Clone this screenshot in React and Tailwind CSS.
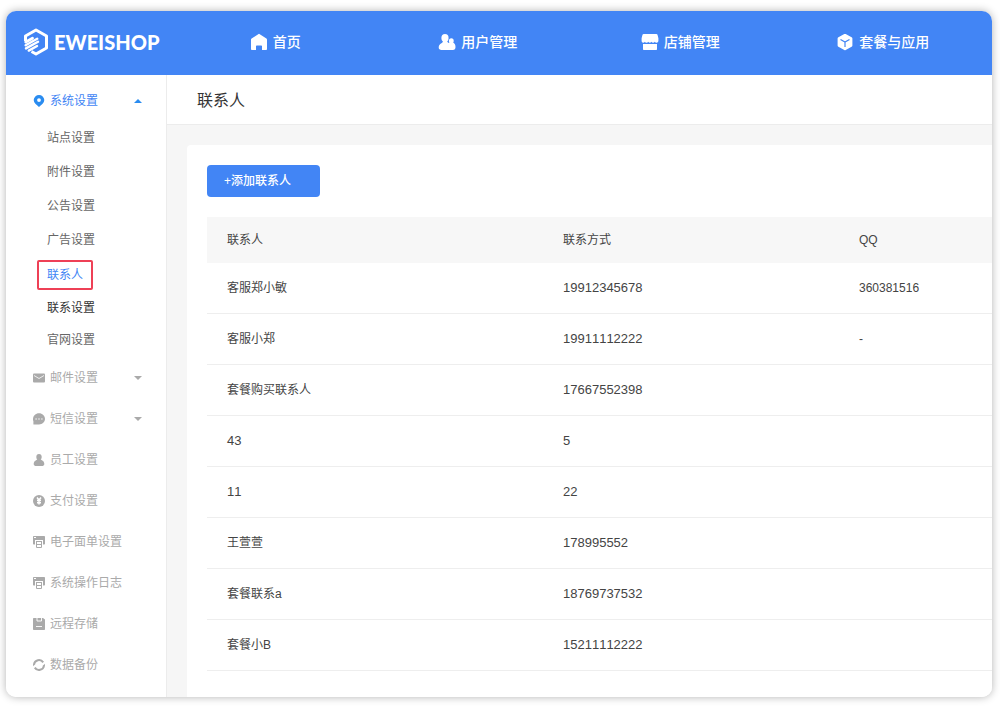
import React, { useState } from 'react';

const HomeIcon = () => (
  <svg viewBox="0 0 18 18" className="w-[18px] h-[18px]" fill="currentColor">
    <path d="M9 .8 16.4 5.6c.4.3.6.7.6 1.2v9.1c0 .7-.5 1.2-1.2 1.2H12v-3.6c0-.6-.4-1-1-1H7c-.6 0-1 .4-1 1v3.6H2.2c-.7 0-1.2-.5-1.2-1.2V6.8c0-.5.2-.9.6-1.2L9 .8z" />
  </svg>
);

const UsersIcon = () => (
  <svg viewBox="0 0 18 18" className="w-[18px] h-[18px]" fill="currentColor">
    <ellipse cx="7" cy="4.9" rx="3.6" ry="4" />
    <path d="M5 7.500h4c.2 1.500 1 2 2 2.600 1.700 1 2.300 2.500 2.300 4.400 0 1.600-1 2.500-2.800 2.500H3.600c-1.900 0-2.900-.9-2.900-2.500 0-2.200 1-3.400 2.700-4.300C4.500 9.600 5 9 5 7.500z" />
    <ellipse cx="13.300" cy="7.800" rx="2.400" ry="2.600" />
    <path d="M11 9.500h4c1.700.8 2.500 2.200 2.500 4.500 0 2-.9 3-2.600 3h-5z" />
  </svg>
);

const ShopIcon = () => (
  <svg viewBox="0 0 18 18" className="w-[18px] h-[18px]" fill="currentColor">
    <path d="M2.7 1h12.600c.6 0 1 .3 1.200.8l.9 3.400v2.600c0 1.200-.8 2-1.800 2-.9 0-1.500-.5-1.800-1-.4.6-1 1-1.700 1-.8 0-1.400-.4-1.800-1-.3.6-.9 1-1.300 1-.8 0-1.400-.4-1.700-1-.4.6-1 1-1.700 1s-1.400-.4-1.700-1c-.4.600-1 1-1.700 1-1 0-1.600-.9-1.600-2V5.200l.9-3.400c.2-.5.600-.8 1.200-.8z" />
    <path d="M2 10.9h14v5.100c0 .6-.4 1-1 1H3c-.6 0-1-.4-1-1v-5.100z" />
  </svg>
);

const CubeIcon = () => (
  <svg viewBox="0 0 18 18" className="w-[18px] h-[18px]">
    <path fill="currentColor" d="M9.7 1.1 15.6 4.3c.5.3.8.7.8 1.3v6.8c0 .6-.3 1-.8 1.300L9.700 16.900c-.5.300-.9.300-1.400 0L2.400 13.700c-.5-.3-.8-.7-.8-1.300V5.600c0-.6.3-1 .8-1.300L8.300 1.100c.5-.3.900-.3 1.400 0z" />
    <path fill="none" stroke="#4285f5" strokeWidth="1.2" d="M4.500 6.400 9 9l4.500-2.600M9 9v5" />
  </svg>
);

const Logo = () => (
  <svg viewBox="0 0 24 28" className="w-6 h-7" fill="none" stroke="currentColor">
    <path strokeWidth="3" strokeLinejoin="round" d="M1.500 13V8L12 2l10.500 6v12L12 26l-4.500-2.500" />
    <path strokeWidth="2.800" strokeLinecap="round" d="M1.800 14 8.500 10.200" />
    <path strokeWidth="2.400" strokeLinecap="round" d="M1.600 17.200 13.200 10.800M2 20.400 14 13.800M4.800 22.600 13 18" />
  </svg>
);

const PinIcon = () => (
  <svg viewBox="0 0 12 12" className="w-3 h-3" fill="currentColor">
    <path fillRule="evenodd" d="M6 0a5.300 5.300 0 0 1 5.300 5.100C11.300 7.900 8.600 9.800 6 12 3.400 9.800.7 7.900.7 5.100A5.300 5.300 0 0 1 6 0zm0 3.200a1.900 1.900 0 1 0 0 3.800 1.900 1.900 0 0 0 0-3.800z" />
  </svg>
);

const MailIcon = () => (
  <svg viewBox="0 0 12 12" className="w-3 h-3">
    <rect y="1.500" width="12" height="9" rx="1" fill="currentColor" />
    <path d="M1 3.500 6 6.500l5-3" fill="none" stroke="#fff" strokeWidth=".8" />
  </svg>
);

const ChatIcon = () => (
  <svg viewBox="0 0 12 12" className="w-3 h-3">
    <path fill="currentColor" d="M6 .2c3.300 0 6 2.500 6 5.600s-2.700 5.600-6 5.600H.4V8.300A5 5 0 0 1 0 6C0 2.900 2.700.2 6 .2z" />
    <path d="M2.400 6h1.400M5.300 6h1.400M8.200 6h1.400" stroke="#fff" strokeWidth="1.200" />
  </svg>
);

const StaffIcon = () => (
  <svg viewBox="0 0 12 12" className="w-3 h-3" fill="currentColor">
    <ellipse cx="6" cy="2.900" rx="2.700" ry="2.900" />
    <path d="M4.300 5h3.400c.1.700.6 1 1.500 1.400 1.500.7 2.100 1.900 2.100 3.500 0 1.400-1.200 2.100-2.500 2.100H3.200C1.900 12 .7 11.300.7 9.900c0-1.600.6-2.800 2.100-3.500.9-.4 1.400-.7 1.500-1.400z" />
  </svg>
);

const PayIcon = () => (
  <svg viewBox="0 0 12 12" className="w-3 h-3">
    <circle cx="6" cy="6" r="6" fill="currentColor" />
    <path d="M4 2.600 6 5l2-2.400M6 5v4.500M4 5.600h4M4 7.700h4" fill="none" stroke="#fff" strokeWidth="1.500" />
  </svg>
);

const PrintIcon = () => (
  <svg viewBox="0 0 12 12" className="w-3 h-3">
    <path fill="currentColor" d="M1 0h10c.6 0 1 .4 1 1v6.500c0 .6-.4 1-1 1h-1V4H2v4.500H1c-.6 0-1-.4-1-1V1c0-.6.4-1 1-1z" />
    <rect x="1" y="1" width="2" height="1" fill="#fff" />
    <path fill="none" stroke="currentColor" d="M3.500 5.500h5v6h-5z" />
    <path d="M3 5.500h6M4 8.500h4" stroke="currentColor" strokeWidth="1" />
  </svg>
);

const DiskIcon = () => (
  <svg viewBox="0 0 12 12" className="w-3 h-3">
    <path fill="currentColor" d="M1 0h9l2 1.500V11c0 .6-.4 1-1 1H1c-.6 0-1-.4-1-1V1c0-.6.4-1 1-1z" />
    <path d="M4 0v3h4.500V0M3 8.500h6" fill="none" stroke="#fff" strokeWidth=".9" />
  </svg>
);

const SyncIcon = () => (
  <svg viewBox="0 0 12 12" className="w-3 h-3">
    <path d="M1 5.500A5 5 0 0 1 10.200 3.400M11 6.500A5 5 0 0 1 1.800 8.600" fill="none" stroke="currentColor" strokeWidth="2" />
    <path fill="currentColor" d="M0 5h2.400L.2 7.200zM12 7H9.600l2.200-2.200z" />
  </svg>
);

const navItems = [
  { label: '首页', Icon: HomeIcon },
  { label: '用户管理', Icon: UsersIcon },
  { label: '店铺管理', Icon: ShopIcon },
  { label: '套餐与应用', Icon: CubeIcon },
];

const subItems = [
  { label: '站点设置', height: 'h-[34px]', style: 'border-transparent text-[#666]' },
  { label: '附件设置', height: 'h-[34px]', style: 'border-transparent text-[#666]' },
  { label: '公告设置', height: 'h-[34px]', style: 'border-transparent text-[#666]' },
  { label: '广告设置', height: 'h-[34px]', style: 'border-transparent text-[#666]' },
  { label: '联系人', height: 'h-9', style: 'border-[#ee4056] text-[#4285f5]' },
  { label: '联系设置', height: 'h-[30px]', style: 'border-transparent text-[#333]' },
  { label: '官网设置', height: 'h-[34px]', style: 'border-transparent text-[#666]' },
];

const menuItems = [
  { label: '邮件设置', Icon: MailIcon, arrow: true },
  { label: '短信设置', Icon: ChatIcon, arrow: true },
  { label: '员工设置', Icon: StaffIcon },
  { label: '支付设置', Icon: PayIcon },
  { label: '电子面单设置', Icon: PrintIcon },
  { label: '系统操作日志', Icon: PrintIcon },
  { label: '远程存储', Icon: DiskIcon },
  { label: '数据备份', Icon: SyncIcon },
];

const contacts = [
  { name: '客服郑小敏', phone: '19912345678', qq: '360381516' },
  { name: '客服小郑', phone: '19911112222', qq: '-' },
  { name: '套餐购买联系人', phone: '17667552398', qq: '' },
  { name: '43', phone: '5', qq: '' },
  { name: '11', phone: '22', qq: '' },
  { name: '王萱萱', phone: '178995552', qq: '' },
  { name: '套餐联系a', phone: '18769737532', qq: '' },
  { name: '套餐小B', phone: '15211112222', qq: '' },
];

const Header = () => (
  <header className="flex items-center h-16 pr-2 pb-0.5 bg-[#4285f5] text-white">
    <a href="#" className="flex items-center gap-1.5 w-[168px] pl-[18px] shrink-0">
      <Logo />
      <span className="font-['Lato'] font-black text-xl">EWEISHOP</span>
    </a>
    <nav className="flex flex-1">
      {navItems.map(({ label, Icon }) => (
        <a key={label} href="#" className="flex flex-1 items-center justify-center gap-[5px] text-sm font-medium">
          <Icon />
          {label}
        </a>
      ))}
    </nav>
  </header>
);

const Sidebar = () => {
  const [open, setOpen] = useState(true);

  return (
    <aside className="w-[161px] shrink-0 border-r border-[#ececec] bg-white pt-[5px] text-xs">
      <button
        type="button"
        aria-expanded={open}
        onClick={() => setOpen(!open)}
        className="flex items-center w-full h-[41px] pl-[27px] pr-6 gap-[5px] text-[#4285f5]"
      >
        <span className="text-[#2a8cf0]"><PinIcon /></span>
        系统设置
        <svg viewBox="0 0 8 4" className="w-2 h-1 ml-auto text-[#2a8cf0]" fill="currentColor">
          <path d="M4 0 8 4H0z" />
        </svg>
      </button>

      {open && (
        <ul>
          {subItems.map((item) => (
            <li key={item.label} className={`flex items-center pl-[31px] ${item.height}`}>
              <a href="#" className={`flex items-center h-[30px] px-2 border-2 rounded-xs ${item.style}`}>
                {item.label}
              </a>
            </li>
          ))}
        </ul>
      )}

      <ul>
        {menuItems.map(({ label, Icon, arrow }) => (
          <li key={label}>
            <a href="#" className="flex items-center h-[41px] pl-[27px] pr-6 gap-[5px] text-[#aaa]">
              <Icon />
              {label}
              {arrow && (
                <svg viewBox="0 0 8 4" className="w-2 h-1 ml-auto" fill="currentColor">
                  <path d="M0 0h8L4 4z" />
                </svg>
              )}
            </a>
          </li>
        ))}
      </ul>
    </aside>
  );
};

const ContactTable = () => (
  <table className="w-full mt-5 table-fixed border-separate border-spacing-0 text-xs text-left text-[#444] [font-kerning:none]">
    <thead>
      <tr className="h-[46px] bg-[#f7f7f7]">
        <th className="w-[336px] pl-5 font-normal">联系人</th>
        <th className="w-[296px] pl-5 font-normal">联系方式</th>
        <th className="pl-5 font-normal">QQ</th>
      </tr>
    </thead>
    <tbody>
      {contacts.map((c) => (
        <tr key={c.name} className="h-[51px] *:border-b *:border-[#eee] *:pl-5">
          <td className={/^\d+$/.test(c.name) ? 'text-[13px]' : ''}>{c.name}</td>
          <td className="text-[13px]">{c.phone}</td>
          <td>{c.qq}</td>
        </tr>
      ))}
    </tbody>
  </table>
);

const App = () => {
  return (
    <div className="flex flex-col min-h-screen pt-[11px] pr-2 pb-[13px] pl-1.5 bg-white font-['Liberation_Sans','Noto_Sans_CJK_SC',sans-serif]">
      <div className="flex flex-col flex-1 overflow-hidden rounded-[10px] shadow-[0_0_8px_rgba(0,0,0,0.3)]">
        <Header />
        <div className="flex flex-1">
          <Sidebar />
          <main className="flex flex-col flex-1 min-w-0 bg-[#f6f6f6]">
            <h1 className="flex items-center h-[50px] pt-0.5 pl-[30px] bg-white border-b border-[#ececec] text-base text-[#333]">联系人</h1>
            <section className="flex-1 mt-5 ml-5 pt-5 pl-5 pb-6 bg-white rounded-tl">
              <button type="button" className="flex items-center h-8 pl-[17px] pr-[29px] bg-[#4285f5] rounded text-xs font-medium text-white">
                +添加联系人
              </button>
              <ContactTable />
            </section>
          </main>
        </div>
      </div>
    </div>
  );
};

export default App;
